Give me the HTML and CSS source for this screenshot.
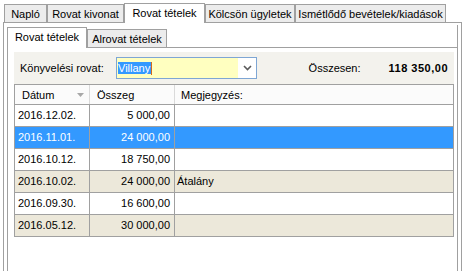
FILE: index.html
```html
<!DOCTYPE html>
<html>
<head>
<meta charset="utf-8">
<link rel="stylesheet" href="styles.css">
</head>
<body>
<div class="app">
  <div class="tabstrip outer-tabs">
    <div class="tab w-naplo">Napló</div>
    <div class="tab w-kivonat">Rovat kivonat</div>
    <div class="tab active w-tetelek">Rovat tételek</div>
    <div class="tab w-kolcson">Kölcsön ügyletek</div>
    <div class="tab w-ism">Ismétlődő bevételek/kiadások</div>
  </div>
  <div class="outer-panel">
    <div class="tabstrip inner-tabs">
      <div class="tab active itab">Rovat tételek</div>
      <div class="tab itab">Alrovat tételek</div>
    </div>
    <div class="inner-panel">
      <div class="filter">
        <span class="label">Könyvelési rovat:</span>
        <div class="combo">
          <div class="combo-field"><span class="sel">Villany</span><span class="caret"></span></div>
          <div class="combo-btn">
            <svg width="9" height="6" viewBox="0 0 9 6"><polyline points="1,1 4.5,4.5 8,1" fill="none" stroke="#5a5a5a" stroke-width="1.6"/></svg>
          </div>
        </div>
        <span class="spacer"></span>
        <span class="sum-label">Összesen:</span>
        <span class="sum">118 350,00</span>
      </div>
      <div class="grid">
        <div class="row head">
          <div class="cell c1 hd">Dátum<svg class="sort" width="7" height="4" viewBox="0 0 7 4"><polygon points="0,0 7,0 3.5,4" fill="#a8a8a8"/></svg></div>
          <div class="cell c2 hd">Összeg</div>
          <div class="cell c3 hd">Megjegyzés:</div>
        </div>
        <div class="row">
          <div class="cell c1">2016.12.02.</div>
          <div class="cell c2 num">5 000,00</div>
          <div class="cell c3"></div>
        </div>
        <div class="row selected">
          <div class="cell c1">2016.11.01.</div>
          <div class="cell c2 num">24 000,00</div>
          <div class="cell c3"></div>
        </div>
        <div class="row">
          <div class="cell c1">2016.10.12.</div>
          <div class="cell c2 num">18 750,00</div>
          <div class="cell c3"></div>
        </div>
        <div class="row alt">
          <div class="cell c1">2016.10.02.</div>
          <div class="cell c2 num">24 000,00</div>
          <div class="cell c3">Átalány</div>
        </div>
        <div class="row">
          <div class="cell c1">2016.09.30.</div>
          <div class="cell c2 num">16 600,00</div>
          <div class="cell c3"></div>
        </div>
        <div class="row alt">
          <div class="cell c1">2016.05.12.</div>
          <div class="cell c2 num">30 000,00</div>
          <div class="cell c3"></div>
        </div>
      </div>
    </div>
  </div>
</div>
</body>
</html>
```

FILE: styles.css
```css
* { box-sizing: border-box; }
html, body {
  margin: 0;
  padding: 0;
  background: #fff;
  overflow: hidden;
}
body {
  width: 466px;
  height: 271px;
  font-family: "Liberation Sans", Arial, sans-serif;
  font-size: 11px;
  color: #000;
}
.app {
  padding-left: 3px;
}
.tabstrip {
  display: flex;
  align-items: flex-end;
  height: 22px;
}
.outer-tabs {
  margin-left: 1px;
}
.tab {
  height: 18px;
  padding-top: 3px;
  line-height: 13px;
  border: 1px solid #a0a0a0;
  border-bottom: none;
  background: #ececec;
  text-align: center;
  white-space: nowrap;
}
.tab.active {
  position: relative;
  z-index: 1;
  height: 20px;
  margin-bottom: -1px;
  background: #fff;
}
.w-naplo { width: 43px; }
.w-kivonat { width: 77px; }
.w-tetelek { width: 81px; }
.w-kolcson { width: 90px; }
.w-ism { width: 151px; }

.outer-panel {
  width: 459px;
  height: 260px;
  border: 1px solid #a0a0a0;
  padding: 2px 3px 0 3px;
  display: flex;
  flex-direction: column;
}
.inner-tabs {
  border-right: 1px solid #a0a0a0;
}
.itab { width: 80px; }
.itab.active { height: 21px; }

.inner-panel {
  flex: 1;
  border: 1px solid #a0a0a0;
  border-bottom: none;
  background: #fff;
  padding: 4px 3px 0 6px;
}
.filter {
  display: flex;
  align-items: center;
  height: 32px;
  background: #f3f2ed;
  padding: 0 6px;
  line-height: 13px;
}
.label {
  width: 96px;
}
.combo {
  display: flex;
  width: 141px;
  height: 22px;
  border: 1px solid #7ea6d4;
}
.combo-field {
  width: 121px;
  background: #ffffc0;
  display: flex;
  align-items: center;
  padding-left: 1px;
}
.sel {
  background: #3399ff;
  color: #fff;
  line-height: 12px;
  height: 12px;
  padding-right: 1px;
}
.caret {
  width: 1px;
  height: 13px;
  background: #d2691e;
}
.combo-btn {
  flex: 1;
  background: #fff;
  display: flex;
  align-items: center;
  justify-content: center;
}
.spacer { flex: 1; }
.sum-label {
  margin-right: 28px;
}
.sum {
  font-weight: bold;
  letter-spacing: 0.5px;
}

.grid {
  border-left: 1px solid #a0a0a0;
  border-top: 1px solid #a0a0a0;
  width: 440px;
}
.row {
  display: grid;
  grid-template-columns: 75px 85px 279px;
  height: 22px;
  border-bottom: 1px solid #a0a0a0;
  line-height: 21px;
}
.row.head {
  height: 20px;
  line-height: 18px;
  background: #fbfbfb;
}
.row.selected {
  background: #3399ff;
  color: #fff;
}
.row.alt {
  background: #ece8da;
}
.cell {
  border-right: 1px solid #a0a0a0;
  padding-left: 3px;
  white-space: nowrap;
  overflow: hidden;
}
.cell.hd {
  border-right-color: #dadada;
  padding-top: 1px;
  padding-left: 7px;
}
.cell.c3.hd {
  border-right-color: #a0a0a0;
  padding-left: 6px;
}
.c1.hd {
  display: flex;
  align-items: center;
  justify-content: space-between;
  padding-right: 5px;
}
.c3 { padding-left: 2px; }
.num {
  text-align: right;
  padding-right: 4px;
}
```
